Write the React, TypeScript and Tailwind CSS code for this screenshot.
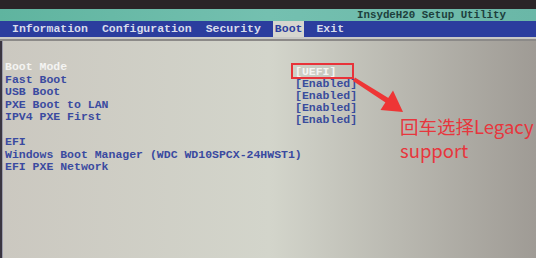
import React from 'react';

const mono = { fontFamily: '"Liberation Mono", "DejaVu Sans Mono", monospace' };

const labels = ['Boot Mode', 'Fast Boot', 'USB Boot', 'PXE Boot to LAN', 'IPV4 PXE First'];
const efiItems = ['EFI', 'Windows Boot Manager (WDC WD10SPCX-24HWST1)', 'EFI PXE Network'];
const menu = ['Information', 'Configuration', 'Security'];

const App = () => {
  return (
    <div className="relative w-[536px] h-[258px] overflow-hidden bg-[#2c2629]" style={mono}>
      {/* Top dark band */}
      <div className="h-[9px] bg-[#2a2427]" />

      {/* Title bar */}
      <div className="h-[12px] flex items-center justify-end pr-[30px] bg-gradient-to-r from-[#5fb49f] via-[#74c0b0] to-[#6ab7a7]">
        <span className="text-[10.8px] font-bold leading-none text-[#1d3f3c]">InsydeH20 Setup Utility</span>
      </div>

      {/* Menu bar */}
      <div className="h-[16px] flex items-center gap-[14px] pl-[12px] bg-[#2b3d9e] text-[11.5px] font-bold leading-none">
        {menu.map((m) => (
          <span key={m} className="text-[#d8dcec]">{m}</span>
        ))}
        <span className="-mx-[2px] px-[2px] h-full flex items-center bg-[#d6d6cf] text-[#2b3d9e]">Boot</span>
        <span className="text-[#d8dcec]">Exit</span>
      </div>
      <div className="h-[2px] bg-[#c9c9c6]" />
      <div className="h-[2px] bg-[#8c8a88]" />

      {/* Main panel */}
      <div className="flex h-[217px]">
        <div className="w-[2px] bg-[#3a3540]" />
        <div className="w-[1px] bg-[#9c9cab]" />
        <div className="flex-1 flex pl-[2px] pt-[20px] bg-gradient-to-r from-[#cbc8c0] via-[#d3d5cb] via-50% to-[#9f9b95] text-[11.5px] font-bold leading-[12.5px]">
          <div className="w-[290px] flex flex-col">
            {labels.map((l, i) => (
              <div key={l} className={i === 0 ? 'text-[#f4f4f2]' : 'text-[#3a4aa0]'}>{l}</div>
            ))}
            <div className="h-[12.5px]" />
            {efiItems.map((l) => (
              <div key={l} className="text-[#3a4aa0] whitespace-nowrap">{l}</div>
            ))}
          </div>
          <div className="flex flex-col pt-[5px] leading-[12px]">
            <div className="relative text-[#f4f4f2]">
              [UEFI]
              <div className="absolute -left-[4px] -top-[3px] w-[63px] h-[16px] border-2 border-[#e8333a]" />
            </div>
            {[0, 1, 2, 3].map((i) => (
              <div key={i} className="text-[#3a4c9c]">[Enabled]</div>
            ))}
          </div>
        </div>
      </div>

      {/* Annotation arrow */}
      <svg className="absolute left-0 top-0" width="536" height="258">
        <polygon points="355,77.5 390,99 387,103.5 353,81" fill="#ee3535" />
        <polygon points="403,112 380.5,110 393,90.5" fill="#ee3535" />
      </svg>

      {/* Annotation text */}
      <div
        className="absolute left-[400px] top-[114px] text-[18.5px] leading-[24px] text-[#e7363d]"
        style={{ fontFamily: '"Noto Sans CJK SC", "Noto Sans", sans-serif' }}
      >
        <div className="whitespace-nowrap">回车选择Legacy</div>
        <div>support</div>
      </div>
    </div>
  );
};

export default App;
